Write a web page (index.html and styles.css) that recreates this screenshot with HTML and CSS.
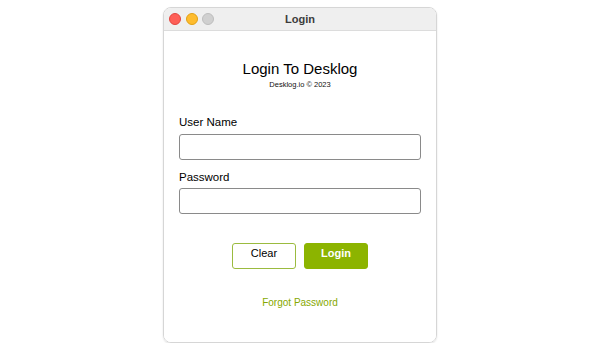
FILE: index.html
```html
<!DOCTYPE html>
<html>
<head>
<meta charset="utf-8">
<link rel="stylesheet" href="styles.css">
</head>
<body>
<div class="window">
  <div class="titlebar">
    <div class="lights">
      <span class="light red"></span>
      <span class="light yellow"></span>
      <span class="light grey"></span>
    </div>
    <div class="title">Login</div>
  </div>
  <div class="content">
    <h1 class="heading">Login To Desklog</h1>
    <div class="sub">Desklog.io © 2023</div>
    <label class="label first">User Name</label>
    <div class="input"></div>
    <label class="label">Password</label>
    <div class="input"></div>
    <div class="buttons">
      <div class="btn clear">Clear</div>
      <div class="btn login">Login</div>
    </div>
    <div class="forgot">Forgot Password</div>
  </div>
</div>
</body>
</html>
```
FILE: styles.css
```css
html, body { margin: 0; padding: 0; background: #fff; }
body {
  font-family: "Liberation Sans", Arial, sans-serif;
  padding-top: 7px;
}
.window {
  width: 274px;
  height: 336px;
  margin-left: 163px;
  border: 1px solid #d6d6d6;
  border-radius: 8px;
  box-shadow: 0 1px 2px rgba(0,0,0,0.12);
  overflow: hidden;
  box-sizing: border-box;
  display: flex;
  flex-direction: column;
}
.titlebar {
  height: 22px;
  background: #efefef;
  border-bottom: 1px solid #dcdcdc;
  position: relative;
  display: flex;
  align-items: center;
  justify-content: center;
  flex-shrink: 0;
}
.lights {
  position: absolute;
  left: 5px;
  top: 0;
  bottom: 0;
  display: flex;
  align-items: center;
  gap: 4.5px;
}
.light {
  width: 12px;
  height: 12px;
  border-radius: 50%;
  display: block;
  box-sizing: border-box;
}
.red { background: #fe5f57; border: 0.5px solid #e2463f; }
.yellow { background: #febc2e; border: 0.5px solid #e1a116; }
.grey { background: #d0d0d0; border: 0.5px solid #bdbdbd; }
.title {
  font-size: 11px;
  font-weight: bold;
  color: #3c3c3c;
}
.content {
  flex: 1;
  background: #fff;
  display: flex;
  flex-direction: column;
  padding: 0 15px;
}
.heading {
  margin: 29px 0 0;
  font-size: 15px;
  font-weight: normal;
  text-align: center;
  color: #000;
  line-height: 18px;
}
.sub {
  font-size: 7.5px;
  line-height: 9px;
  text-align: center;
  margin-top: 2px;
  color: #111;
}
.label {
  font-size: 11.5px;
  color: #000;
  margin-top: 10px;
  line-height: 14px;
}
.label.first { margin-top: 26px; }
.input {
  margin-top: 4px;
  height: 26px;
  border: 1px solid #8a8a8a;
  border-radius: 3px;
  box-sizing: border-box;
  width: 242px;
}
.label.first + .input { margin-top: 5px; }
.buttons {
  display: flex;
  justify-content: center;
  gap: 8px;
  margin-top: 29px;
}
.btn {
  width: 64px;
  height: 26px;
  box-sizing: border-box;
  border-radius: 3px;
  font-size: 11px;
  display: flex;
  align-items: center;
  justify-content: center;
  padding-bottom: 6px;
}
.clear { border: 1px solid #9bbb3f; color: #000; background: #fff; }
.login { background: #8cb400; color: #fff; font-weight: bold; border: 1px solid #8cb400; }
.forgot {
  margin-top: 28px;
  line-height: 12px;
  text-align: center;
  font-size: 10px;
  color: #86a800;
}
```
